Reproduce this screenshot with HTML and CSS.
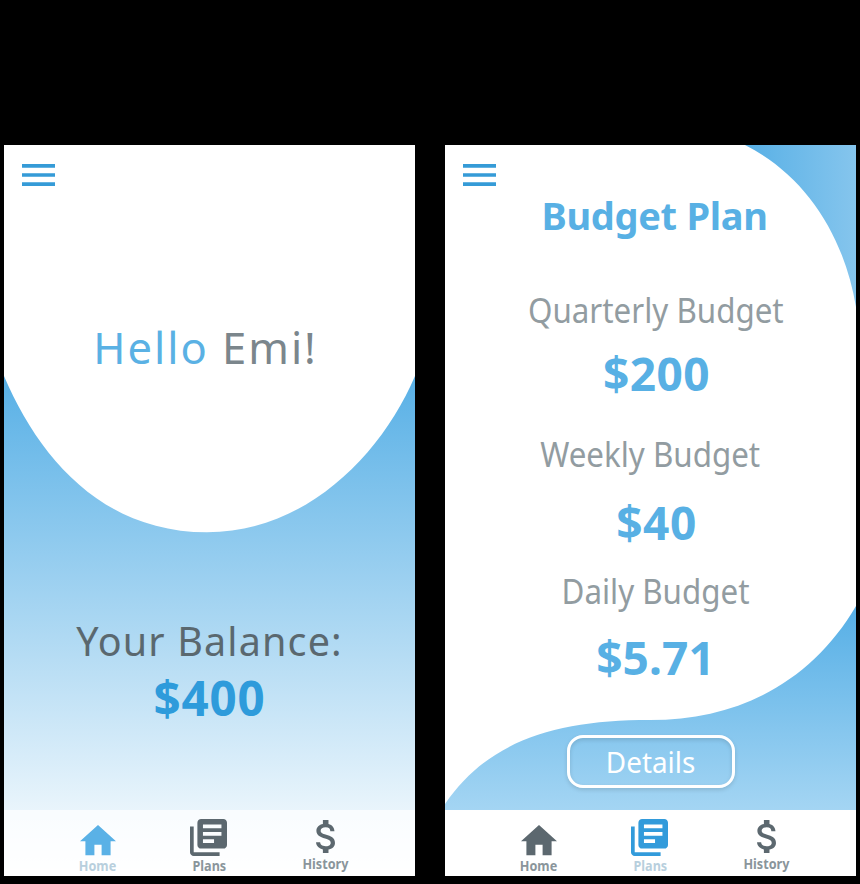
FILE: index.html
```html
<!DOCTYPE html>
<html lang="en">
<head>
<meta charset="utf-8">
<title>Budget</title>
<link rel="stylesheet" href="styles.css">
</head>
<body>
<svg class="symbols" aria-hidden="true">
  <symbol id="menu" viewBox="3 6 18 12"><path d="M3 18h18v-2H3v2zm0-5h18v-2H3v2zm0-7v2h18V6H3z"/></symbol>
  <symbol id="home" viewBox="2 3 20 17"><path d="M10 20v-6h4v6h5v-8h3L12 3 2 12h3v8z"/></symbol>
  <symbol id="plans" viewBox="2 2 20 20"><path d="M4 6H2v14c0 1.1.9 2 2 2h14v-2H4V6zm16-4H8c-1.1 0-2 .9-2 2v12c0 1.1.9 2 2 2h12c1.1 0 2-.9 2-2V4c0-1.1-.9-2-2-2zm-1 9H9V9h10v2zm-4 4H9v-2h6v2zm4-8H9V5h10v2z"/></symbol>
  <symbol id="money" viewBox="6.3 3 10.2 18"><path d="M11.8 10.9c-2.27-.59-3-1.2-3-2.15 0-1.09 1.01-1.85 2.7-1.85 1.78 0 2.44.85 2.5 2.1h2.21c-.07-1.72-1.12-3.3-3.21-3.81V3h-3v2.16c-1.94.42-3.5 1.68-3.5 3.61 0 2.31 1.91 3.46 4.7 4.13 2.5.6 3 1.48 3 2.41 0 .69-.49 1.79-2.7 1.79-2.06 0-2.87-.92-2.98-2.1h-2.2c.12 2.19 1.76 3.42 3.68 3.83V21h3v-2.15c1.95-.37 3.5-1.5 3.5-3.55 0-2.84-2.43-3.81-4.7-4.4z"/></symbol>
</svg>
<main class="board">
  <section class="screen">
    <svg class="backdrop" viewBox="0 0 411 731">
      <defs>
        <linearGradient id="sky" gradientUnits="userSpaceOnUse" x1="0" y1="231" x2="0" y2="731">
          <stop offset="0" stop-color="#58b0e6"/><stop offset="1" stop-color="#fff"/>
        </linearGradient>
      </defs>
      <path d="M0 231C34 311 97 387.3 203 387.3C301 387.3 377 311 411 231V731H0z" fill="url(#sky)"/>
    </svg>
    <header class="top"><svg class="menu"><use href="#menu"/></svg></header>
    <div class="content">
      <h1 class="hello"><span class="name">Hello</span> Emi!</h1>
      <p class="balance-label">Your Balance:</p>
      <p class="balance">$400</p>
    </div>
    <nav class="nav sheer">
      <a class="item active"><svg class="icon-home"><use href="#home"/></svg><span class="caption">Home</span></a>
      <a class="item"><svg class="icon-plans"><use href="#plans"/></svg><span class="caption">Plans</span></a>
      <a class="item raised"><svg class="icon-money"><use href="#money"/></svg><span class="caption">History</span></a>
    </nav>
  </section>

  <section class="screen">
    <svg class="backdrop" viewBox="0 0 411 731">
      <defs>
        <linearGradient id="corner" gradientUnits="userSpaceOnUse" x1="300" y1="0" x2="411" y2="0">
          <stop offset="0" stop-color="#58b0e6"/><stop offset="1" stop-color="#85c5ed"/>
        </linearGradient>
        <linearGradient id="wave" gradientUnits="userSpaceOnUse" x1="0" y1="461" x2="0" y2="665">
          <stop offset="0" stop-color="#56afe6"/><stop offset="1" stop-color="#a4d5f3"/>
        </linearGradient>
      </defs>
      <path d="M300 0C360 30 399 90 411 162V0z" fill="url(#corner)"/>
      <path d="M0 659C43 596 110 575 205 575C295 575 367 536 411 461V665H0z" fill="url(#wave)"/>
    </svg>
    <header class="top"><svg class="menu"><use href="#menu"/></svg></header>
    <div class="content plan">
      <h1 class="title">Budget Plan</h1>
      <p class="label quarterly">Quarterly Budget</p>
      <p class="amount quarterly-sum">$200</p>
      <p class="label weekly">Weekly Budget</p>
      <p class="amount weekly-sum">$40</p>
      <p class="label daily">Daily Budget</p>
      <p class="amount daily-sum">$5.71</p>
      <button class="details"><span class="details-text">Details</span></button>
    </div>
    <nav class="nav">
      <a class="item"><svg class="icon-home"><use href="#home"/></svg><span class="caption">Home</span></a>
      <a class="item active deep"><svg class="icon-plans"><use href="#plans"/></svg><span class="caption">Plans</span></a>
      <a class="item raised"><svg class="icon-money"><use href="#money"/></svg><span class="caption">History</span></a>
    </nav>
  </section>
</main>
</body>
</html>
```

FILE: styles.css
```css
* { box-sizing: border-box; margin: 0; }

body {
  height: 884px;
  background: #000;
  font-family: "Noto Sans", "Open Sans", sans-serif;
  overflow: hidden;
}

.symbols { display: none; }

.board {
  display: grid;
  grid-template-columns: 411px 411px;
  gap: 30px;
  padding: 145px 4px 8px;
}

.screen {
  position: relative;
  display: flex;
  flex-direction: column;
  height: 731px;
  background: #fff;
  overflow: hidden;
}

.backdrop { position: absolute; inset: 0; width: 411px; height: 731px; }

.top { position: relative; height: 45px; padding: 19px 18.4px 0; }
.menu { display: block; width: 33px; height: 22px; fill: #359bd7; }

.content {
  position: relative;
  flex: 1;
  display: flex;
  flex-direction: column;
  align-items: center;
  white-space: nowrap;
}

.hello {
  margin: 127px 8px 0 0;
  font-size: 43.5px;
  font-weight: 400;
  line-height: 60px;
  letter-spacing: 2px;
  color: #7b868c;
}
.name { color: #5ab1e4; }

.balance-label {
  margin-top: 239px;
  font-size: 39.5px;
  line-height: 50px;
  letter-spacing: 1.15px;
  color: #5a686f;
}
.balance {
  margin-top: 1.6px;
  font-size: 47.5px;
  font-weight: 700;
  line-height: 60px;
  letter-spacing: 0.8px;
  color: #2e9bdb;
}

.plan { padding-left: 10px; }
.title {
  margin-right: 2px;
  font-size: 38px;
  font-weight: 700;
  line-height: 50px;
  letter-spacing: -0.3px;
  color: #58b0e4;
}
.label {
  font-size: 34.5px;
  line-height: 40px;
  color: #929ca1;
  transform: scaleX(0.908);
}
.amount {
  font-size: 46px;
  font-weight: 700;
  line-height: 60px;
  letter-spacing: 0.5px;
  color: #58b0e4;
}
.quarterly { margin-top: 49.6px; }
.quarterly-sum { margin: 13.6px 0 0 2px; }
.weekly { margin: 30.4px 10px 0 0; }
.weekly-sum { margin: 18.6px 0 0 2px; }
.daily { margin-top: 18.4px; }
.daily-sum { margin-top: 16.6px; letter-spacing: 0.1px; }

.details {
  width: 168px;
  height: 53px;
  margin: 47.8px 10px 0 0;
  padding: 0;
  border: 3px solid #fff;
  border-radius: 16px;
  background: none;
  box-shadow: 0 2px 4px rgba(0, 0, 0, 0.13), inset 0 2px 4px rgba(0, 0, 0, 0.13);
  color: #fff;
  font: 400 29px/40px "Noto Sans", "Open Sans", sans-serif;
}
.details-text { display: inline-block; padding-top: 2px; transform: scaleX(0.96); }

.nav {
  position: relative;
  display: grid;
  grid-template-columns: 112px 112px 120px;
  height: 66px;
  padding-left: 37.5px;
  background: #fff;
}
.sheer { background: rgba(255, 255, 255, 0.7); }

.item {
  display: flex;
  flex-direction: column;
  align-items: center;
  justify-content: flex-end;
  gap: 1.8px;
  padding-bottom: 2.6px;
  fill: #5c686f;
  color: #8a959b;
}
.raised { padding-bottom: 5px; }
.active { fill: #5ab1e6; color: #b8cfdd; }
.deep { fill: #329bdb; }

.icon-home { width: 36px; height: 30.6px; }
.icon-plans { width: 37px; height: 37px; margin-right: 2px; }
.icon-money { width: 19px; height: 33.5px; }

.caption {
  font-size: 14.5px;
  font-weight: 700;
  line-height: 16px;
  transform: scaleX(0.87);
}
```
